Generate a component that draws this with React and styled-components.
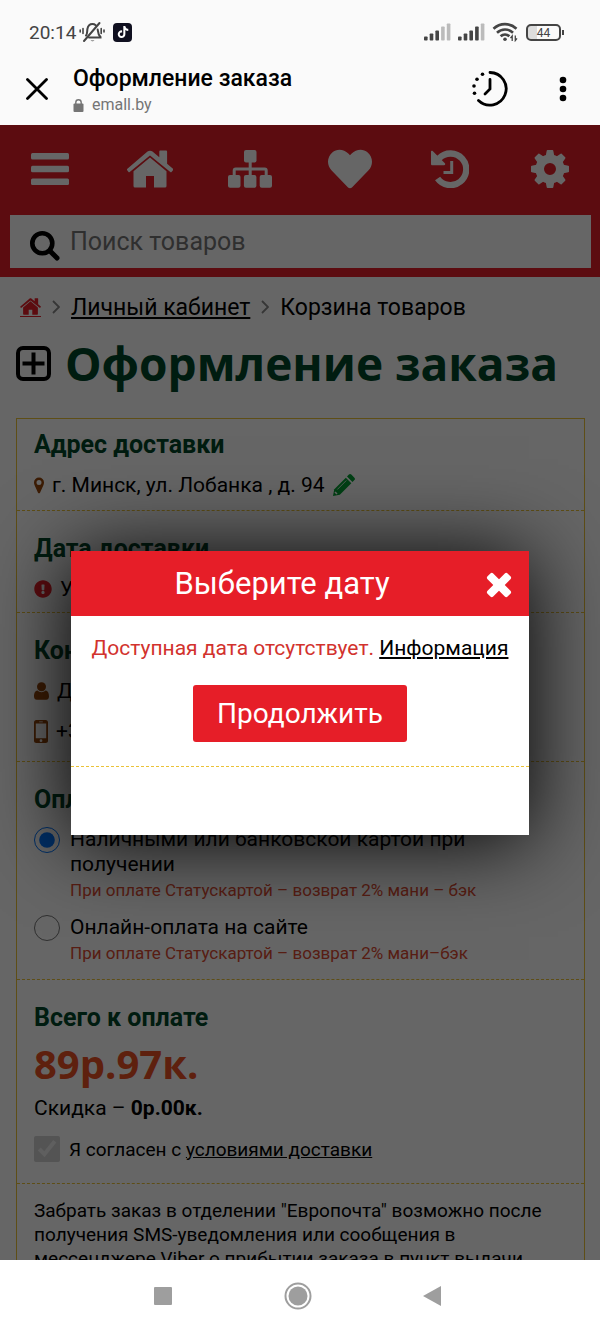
import React from 'react';
import styled, { createGlobalStyle } from 'styled-components';
import { FaExclamationCircle, FaHeart, FaTiktok } from 'react-icons/fa';

const RED = '#e61e28';
const GREEN = '#004628';
const BROWN = '#96460a';
const YELLOW = '#ebc337';

const GlobalStyle = createGlobalStyle`
  * {
    box-sizing: border-box;
  }
  body {
    margin: 0;
    background: #fff;
    color: #000;
    font-family: Roboto, "Liberation Sans", sans-serif;
  }
`;

const BellOffIcon = () => (
  <svg width="26" height="22" viewBox="0 0 26 22" fill="none" stroke="#444" strokeWidth="2" strokeLinecap="round">
    <path d="M7 14.5c1.5-1.6 1-4 1.4-6.5C9 4.700 11 3 13.500 3c1.300 0 2.300.4 3.200 1.200M18.700 8.500c.3 3 .3 5 2.800 7.500v.6H10" />
    <path d="M5 20L20.500 2" />
    <path d="M11.500 19.500a2.500 2 0 0 0 4 0z" fill="#444" stroke="none" />
    <path d="M4 7.500v5M1.200 9v2M22.200 7.500v5M25 9v2" strokeWidth="1.600" />
  </svg>
);

const SignalIcon = ({ level }) => (
  <svg width="27" height="18" viewBox="0 0 27 18">
    {[4, 7, 10, 14, 17].map((height, i) => (
      <rect
        key={height}
        x={i * 5.700}
        y={17.500 - height}
        width="3.600"
        height={height}
        rx="0.800"
        fill={i < level ? '#444' : '#bbb'}
      />
    ))}
  </svg>
);

const WifiIcon = () => (
  <svg width="27" height="20" viewBox="0 0 27 20" fill="none" stroke="#444" strokeWidth="2.600">
    <path d="M1.500 6.800c6.500-6.200 16.500-6.200 23 0" />
    <path d="M5 10.700c4.600-4.300 11.400-4.300 16 0" />
    <path d="M8.600 14.300c2.600-2.400 6.200-2.400 8.800 0" />
    <circle cx="13" cy="17.300" r="1.800" fill="#444" stroke="none" />
    <path d="M20.200 19v-5l-1.700 2.200M23.300 13.500v5l1.700-2.200" strokeWidth="1.300" />
  </svg>
);

const CloseIcon = () => (
  <svg width="22" height="22" viewBox="0 0 22 22" fill="none" stroke="#000" strokeWidth="2.800" strokeLinecap="round">
    <path d="M1.500 1.500l19 19M20.500 1.500l-19 19" />
  </svg>
);

const LockIcon = () => (
  <svg width="11" height="13" viewBox="0 0 11 13">
    <rect x="0.500" y="4.500" width="10" height="8.500" rx="1" fill="#757575" />
    <path d="M2.800 5V3.500a2.700 2.700 0 0 1 5.400 0V5" fill="none" stroke="#757575" strokeWidth="1.400" />
  </svg>
);

const RecentIcon = () => (
  <svg width="36" height="36" viewBox="0 0 36 36" fill="none" stroke="#000" strokeWidth="2.800" strokeLinecap="round">
    <path d="M18 1.500a16.300 16.300 0 1 1-11.500 28" />
    <path d="M18 8.500V18l-5 5" />
    <g fill="#000" stroke="none">
      <circle cx="10.500" cy="3.300" r="1.800" />
      <circle cx="5" cy="8.300" r="1.800" />
      <circle cx="2" cy="15" r="1.800" />
      <circle cx="2.500" cy="22.300" r="1.800" />
    </g>
  </svg>
);

const DotsIcon = () => (
  <svg width="8" height="26" viewBox="0 0 8 26">
    <circle cx="4" cy="4" r="3.300" />
    <circle cx="4" cy="13" r="3.300" />
    <circle cx="4" cy="22" r="3.300" />
  </svg>
);

const BarsIcon = () => (
  <svg width="38" height="32" viewBox="0 0 38 32" fill="currentColor">
    <rect width="38" height="6.500" rx="1.500" />
    <rect y="12.700" width="38" height="6.500" rx="1.500" />
    <rect y="25.400" width="38" height="6.500" rx="1.500" />
  </svg>
);

const HomeIcon = ({ width, height }) => (
  <svg width={width} height={height} viewBox="0 0 46 38" fill="currentColor">
    <path d="M23 7.500l16.500 13.700V36a1.500 1.500 0 0 1-1.500 1.500H27V26h-8v11.500H8A1.500 1.500 0 0 1 6.500 36V21.200z" />
    <path d="M.4 18.800L20.500 1.600c1.500-1.200 3.500-1.200 5 0l6.800 5.700V1.500c0-.5.300-.9.900-.9h6c.5 0 .9.400.9.900v12.300l6 5c.4.300.4.900.1 1.200l-1.700 1.900c-.3.400-.8.400-1.200.1L23 5.400 2.700 22c-.4.300-.9.300-1.200-.1L-.1 20c-.2-.3-.1-.9.500-1.200z" />
  </svg>
);

const SitemapIcon = () => (
  <svg width="44" height="38" viewBox="0 0 44 38" fill="currentColor">
    <rect x="16" width="12.500" height="12.500" rx="2" />
    <rect y="25" width="12.500" height="12.800" rx="2" />
    <rect x="15.900" y="25" width="12.500" height="12.800" rx="2" />
    <rect x="31.700" y="25" width="12.300" height="12.800" rx="2" />
    <path d="M22.200 12v14M6.200 26v-5.500a1.500 1.500 0 0 1 1.500-1.500h29a1.500 1.500 0 0 1 1.500 1.500V26" fill="none" stroke="currentColor" strokeWidth="3" />
  </svg>
);

const HistoryIcon = () => (
  <svg width="38" height="38" viewBox="0 0 38 38" fill="none" stroke="currentColor">
    <path d="M8.200 8.200A15.800 15.800 0 1 1 6.600 28.500" strokeWidth="6.300" />
    <path d="M0 1.800c0-1 1-1.400 1.700-.7l12.200 12.200c.7.700.3 2-.8 2H1.300C.6 15.300 0 14.700 0 14z" fill="currentColor" stroke="none" />
    <path d="M20.700 11v11.500H12.500" strokeWidth="3" />
  </svg>
);

const CogIcon = () => (
  <svg width="38" height="38" viewBox="-19 -19 38 38" fill="none" stroke="currentColor">
    <circle r="10.300" strokeWidth="8.600" />
    {[0, 45, 90, 135, 180, 225, 270, 315].map(angle => (
      <path
        key={angle}
        transform={`rotate(${angle})`}
        d="M-4.400-12.500L-3.300-18.300Q-3.200-19-2.500-19h5Q3.200-19 3.300-18.300L4.400-12.500z"
        fill="currentColor"
        stroke="none"
      />
    ))}
  </svg>
);

const SearchIcon = () => (
  <svg width="30" height="30" viewBox="0 0 30 30" fill="none" stroke="#000">
    <circle cx="12.300" cy="12.300" r="10" strokeWidth="4.600" />
    <path d="M20 20l7 7" strokeWidth="5" strokeLinecap="round" />
  </svg>
);

const ChevronIcon = () => (
  <svg width="8" height="14" viewBox="0 0 8 14" fill="none" stroke="#888" strokeWidth="1.800">
    <path d="M1 1l6 6-6 6" />
  </svg>
);

const PlusSquareIcon = () => (
  <svg width="35" height="35" viewBox="0 0 35 35" fill="none" stroke="#000" strokeWidth="4">
    <rect x="2" y="2" width="31" height="31" rx="5" />
    <path d="M17.500 6.500v22M6.500 17.500h22" />
  </svg>
);

const MarkerIcon = () => (
  <svg width="10" height="17" viewBox="0 0 10 17" fill={BROWN}>
    <path fillRule="evenodd" d="M5 .5A5 5 0 0 0 0 5.500c0 1 .2 1.700.5 2.400L4 15.700c.4.800 1.600.8 2 0l3.500-7.800c.3-.7.5-1.400.5-2.400a5 5 0 0 0-5-5zm0 2.600a2.500 2.500 0 1 1 0 5 2.500 2.500 0 0 1 0-5z" />
  </svg>
);

const PencilIcon = () => (
  <svg width="22" height="22" viewBox="0 0 22 22" fill="#00a032">
    <path d="M0 22l1.300-6.800L12.800 3.700l5.500 5.500L6.800 20.700z" />
    <path d="M14 2.500L15.900.6c.7-.7 1.700-.7 2.400 0l3.100 3.100c.7.700.7 1.700 0 2.400L19.500 8z" />
    <path d="M4.300 15.500l9-9" stroke="#fff" strokeWidth="0.800" />
    <path d="M2 18l2 2" stroke="#fff" strokeWidth="1.600" />
  </svg>
);

const UserIcon = () => (
  <svg width="15" height="18" viewBox="0 0 15 18" fill={BROWN}>
    <circle cx="7.500" cy="4.800" r="4.500" />
    <path d="M3.500 8.500c2.400 2.200 5.600 2.200 8 0C14 8.700 15 11.300 15 14.500c0 2-1.200 3.300-2.800 3.300H2.800C1.200 17.800 0 16.500 0 14.500c0-3.200 1-5.800 3.500-6z" />
  </svg>
);

const PhoneIcon = () => (
  <svg width="14" height="23" viewBox="0 0 14 23" fill={BROWN}>
    <path fillRule="evenodd" d="M2.300 0h9.400C13 0 14 1 14 2.300v18.400c0 1.300-1 2.300-2.300 2.300H2.300C1 23 0 22 0 20.700V2.300C0 1 1 0 2.300 0zM1.800 3.500v14.800h10.400V3.500zM7 19.300a1.400 1.400 0 1 0 0 2.800 1.400 1.400 0 0 0 0-2.800zM5.200 1.400v.8h3.600v-.8z" />
  </svg>
);

const TimesIcon = () => (
  <svg width="26" height="30" viewBox="-13 -17 26 30" fill="#fff">
    <rect x="-14.200" y="-4" width="28.400" height="8" rx="2" transform="rotate(45)" />
    <rect x="-14.200" y="-4" width="28.400" height="8" rx="2" transform="rotate(-45)" />
  </svg>
);

const Header = () => (
  <SiteHeader>
    <Menu>
      <MenuLink href="#menu" aria-label="Меню"><BarsIcon /></MenuLink>
      <MenuLink href="#home" aria-label="Главная"><HomeIcon width={46} height={38} /></MenuLink>
      <MenuLink href="#catalog" aria-label="Каталог"><SitemapIcon /></MenuLink>
      <MenuLink href="#favorites" aria-label="Избранное"><FaHeart size={44} /></MenuLink>
      <MenuLink href="#history" aria-label="История"><HistoryIcon /></MenuLink>
      <MenuLink href="#settings" aria-label="Настройки"><CogIcon /></MenuLink>
    </Menu>
    <SearchBox>
      <SearchIcon />
      <SearchInput type="text" name="search" aria-label="Поиск товаров" placeholder="Поиск товаров" />
    </SearchBox>
  </SiteHeader>
);

const PaymentOption = ({ id, title, note, checked }) => (
  <Option>
    <Tick type="radio" name="payment" id={id} defaultChecked={checked} />
    <div>
      <OptionLabel htmlFor={id}>{title}</OptionLabel>
      <Note>{note}</Note>
    </div>
  </Option>
);

const Order = () => (
  <Card>
    <Section $top={10} $bottom={5}>
      <SectionTitle>Адрес доставки</SectionTitle>
      <Row>
        <MarkerIcon />
        г. Минск, ул. Лобанка , д. 94
        <IconLink href="#address" aria-label="Изменить адрес"><PencilIcon /></IconLink>
      </Row>
    </Section>
    <Section $bottom={3}>
      <SectionTitle>Дата доставки</SectionTitle>
      <Row>
        <FaExclamationCircle size={18} color={RED} />
        Укажите дату
      </Row>
    </Section>
    <Section $bottom={10}>
      <SectionTitle>Контактные данные</SectionTitle>
      <Row><UserIcon />Дмитрий</Row>
      <Row><PhoneIcon />+375 29</Row>
    </Section>
    <Section $bottom={13}>
      <SectionTitle>Оплата</SectionTitle>
      <Options>
        <PaymentOption
          id="pay-cash"
          title="Наличными или банковской картой при получении"
          note="При оплате Статускартой – возврат 2% мани – бэк"
          checked
        />
        <PaymentOption
          id="pay-online"
          title="Онлайн-оплата на сайте"
          note="При оплате Статускартой – возврат 2% мани–бэк"
        />
      </Options>
    </Section>
    <Section $bottom={21}>
      <SectionTitle>Всего к оплате</SectionTitle>
      <Price>89р.97к.</Price>
      <Discount>Скидка – <b>0р.00к.</b></Discount>
      <Agreement>
        <Tick type="checkbox" id="agree" defaultChecked disabled />
        <label htmlFor="agree">
          Я согласен с <TextLink href="#terms">условиями доставки</TextLink>
        </label>
      </Agreement>
    </Section>
    <Section $top={15}>
      <Info>
        Забрать заказ в отделении "Европочта" возможно после получения
        SMS-уведомления или сообщения в мессенджере Viber о прибытии заказа в пункт выдачи
      </Info>
    </Section>
  </Card>
);

const DateModal = () => (
  <Overlay>
    <Modal role="dialog" aria-labelledby="modal-title">
      <ModalHeader>
        <ModalTitle id="modal-title">Выберите дату</ModalTitle>
        <ModalClose type="button" aria-label="Закрыть"><TimesIcon /></ModalClose>
      </ModalHeader>
      <ModalBody>
        <ModalText>
          Доступная дата отсутствует. <TextLink href="#info">Информация</TextLink>
        </ModalText>
        <SubmitButton type="button">Продолжить</SubmitButton>
      </ModalBody>
      <ModalFooter />
    </Modal>
  </Overlay>
);

const App = () => (
  <Screen>
    <GlobalStyle />
    <StatusBar>
      <Clock>20:14</Clock>
      <BellOffIcon />
      <AppBadge><FaTiktok size={12} /></AppBadge>
      <StatusRight>
        <SignalIcon level={3} />
        <SignalIcon level={4} />
        <WifiIcon />
        <Battery>44</Battery>
      </StatusRight>
    </StatusBar>
    <BrowserBar>
      <BarButton type="button" aria-label="Закрыть вкладку"><CloseIcon /></BarButton>
      <PageInfo>
        <PageTitle>Оформление заказа</PageTitle>
        <PageUrl><LockIcon />emall.by</PageUrl>
      </PageInfo>
      <BarButton type="button" aria-label="Недавние"><RecentIcon /></BarButton>
      <BarButton type="button" aria-label="Ещё"><DotsIcon /></BarButton>
    </BrowserBar>
    <Viewport>
      <Header />
      <Breadcrumbs>
        <HomeLink href="#home" aria-label="Главная"><HomeIcon width={21} height={17} /></HomeLink>
        <ChevronIcon />
        <TextLink href="#account">Личный кабинет</TextLink>
        <ChevronIcon />
        <span>Корзина товаров</span>
      </Breadcrumbs>
      <Heading><PlusSquareIcon />Оформление заказа</Heading>
      <Order />
      <DateModal />
    </Viewport>
    <SystemNav>
      <SystemButton type="button" aria-label="Приложения">
        <svg width="28" height="28"><rect x="5" y="5" width="18" height="18" rx="1" fill="#9e9e9e" /></svg>
      </SystemButton>
      <SystemButton type="button" aria-label="Домой">
        <svg width="28" height="28">
          <circle cx="14" cy="14" r="12.500" fill="none" stroke="#9e9e9e" strokeWidth="2" />
          <circle cx="14" cy="14" r="9.500" fill="#9e9e9e" />
        </svg>
      </SystemButton>
      <SystemButton type="button" aria-label="Назад">
        <svg width="28" height="28"><path d="M4 14L22 4v20z" fill="#9e9e9e" /></svg>
      </SystemButton>
    </SystemNav>
  </Screen>
);

export default App;

const Screen = styled.div`
  display: flex;
  flex-direction: column;
  height: 100vh;
`;

const StatusBar = styled.div`
  display: flex;
  flex: none;
  align-items: center;
  height: 56px;
  padding: 8px 39px 0 29px;
  background: #fafafa;
`;

const Clock = styled.span`
  margin-right: 3px;
  color: #444;
  font-size: 19px;
`;

const AppBadge = styled.span`
  display: flex;
  align-items: center;
  justify-content: center;
  width: 19px;
  height: 19px;
  margin-left: 8px;
  border-radius: 4px;
  background: #101020;
  color: #fff;
`;

const StatusRight = styled.div`
  display: flex;
  align-items: center;
  gap: 7px;
  margin-left: auto;
`;

const Battery = styled.span`
  position: relative;
  width: 35px;
  height: 17px;
  border: 2px solid #444;
  border-radius: 5px;
  background: linear-gradient(90deg, #ddd 30%, transparent 30%);
  color: #444;
  font-size: 12px;
  line-height: 14px;
  text-align: center;
  &::after {
    position: absolute;
    top: 4px;
    right: -5px;
    width: 2px;
    height: 5px;
    background: #444;
    content: '';
  }
`;

const BrowserBar = styled.div`
  display: flex;
  flex: none;
  align-items: center;
  height: 69px;
  padding: 0 15px 3px;
  background: #fafafa;
`;

const BarButton = styled.button`
  display: flex;
  align-items: center;
  justify-content: center;
  min-width: 44px;
  height: 44px;
  padding: 0;
  border: 0;
  background: none;
  & + & {
    margin-left: 29px;
  }
`;

const PageInfo = styled.div`
  flex: 1;
  padding: 4px 0 0 14px;
`;

const PageTitle = styled.div`
  font-size: 23px;
  font-weight: 500;
  line-height: 28px;
`;

const PageUrl = styled.div`
  display: flex;
  align-items: center;
  gap: 8px;
  color: #757575;
  font-size: 16px;
  line-height: 24px;
`;

const Viewport = styled.main`
  position: relative;
  flex: 1;
  min-height: 0;
  overflow: hidden;
`;

const SiteHeader = styled.header`
  padding-bottom: 9px;
  background: ${RED};
`;

const Menu = styled.nav`
  display: grid;
  grid-template-columns: repeat(6, 1fr);
  height: 90px;
  padding-bottom: 2px;
`;

const MenuLink = styled.a`
  display: flex;
  align-items: center;
  justify-content: center;
  color: #fff;
`;

const SearchBox = styled.div`
  display: flex;
  align-items: center;
  height: 53px;
  margin: 0 9px 0 10px;
  padding: 0 10px 0 20px;
  background: #fff;
  svg {
    flex: none;
    margin-top: 8px;
  }
`;

const SearchInput = styled.input`
  flex: 1;
  min-width: 0;
  height: 52px;
  padding: 0 10px;
  border: 0;
  background: none;
  font-family: inherit;
  font-size: 25px;
  &::placeholder {
    color: #757575;
  }
`;

const Breadcrumbs = styled.nav`
  display: flex;
  align-items: center;
  gap: 11px;
  height: 60px;
  padding: 0 20px;
  font-size: 23px;
`;

const HomeLink = styled.a`
  display: flex;
  padding-bottom: 1px;
  border-bottom: 1px solid ${RED};
  color: ${RED};
`;

const TextLink = styled.a`
  color: #000;
  text-decoration: underline;
`;

const Heading = styled.h1`
  display: flex;
  align-items: center;
  gap: 14px;
  margin: 0 16px 29px;
  color: ${GREEN};
  font-family: "Open Sans", "Noto Sans", sans-serif;
  font-size: 46px;
  font-weight: 700;
  line-height: 52px;
  white-space: nowrap;
`;

const Card = styled.div`
  margin: 0 15px 0 16px;
  border: 1px solid ${YELLOW};
`;

const Section = styled.section`
  padding: ${({ $top = 22 }) => $top}px 17px ${({ $bottom = 15 }) => $bottom}px;
  border-bottom: 1px dashed ${YELLOW};
`;

const SectionTitle = styled.h2`
  margin: 0 0 4px;
  color: ${GREEN};
  font-size: 25px;
  font-weight: 700;
  line-height: 32px;
`;

const Row = styled.div`
  display: flex;
  align-items: center;
  gap: 8px;
  height: 40px;
  font-size: 21px;
`;

const IconLink = styled.a`
  display: flex;
`;

const Options = styled.div`
  display: flex;
  flex-direction: column;
  gap: 12px;
  padding-top: 7px;
`;

const Option = styled.div`
  display: flex;
  align-items: flex-start;
  gap: 10px;
`;

const Tick = styled.input`
  flex: none;
  width: 26px;
  height: 26px;
  margin: 0;
`;

const OptionLabel = styled.label`
  display: block;
  max-width: 440px;
  font-size: 21px;
  line-height: 25px;
`;

const Note = styled.div`
  color: #dc4b32;
  font-size: 17px;
  line-height: 26px;
`;

const Price = styled.div`
  color: #eb5023;
  font-family: "Open Sans", "Noto Sans", sans-serif;
  font-size: 40px;
  font-weight: 700;
  line-height: 52px;
`;

const Discount = styled.div`
  font-size: 21px;
  line-height: 36px;
`;

const Agreement = styled.div`
  display: flex;
  align-items: center;
  gap: 9px;
  margin-top: 10px;
  font-size: 19px;
`;

const Info = styled.p`
  margin: 0;
  font-size: 19px;
  line-height: 24px;
`;

const Overlay = styled.div`
  position: absolute;
  inset: 0;
  display: flex;
  align-items: center;
  justify-content: center;
  padding: 0 71px;
  background: rgba(0, 0, 0, 0.6);
`;

const Modal = styled.div`
  flex: 1;
  max-width: 600px;
  background: #fff;
  box-shadow: 0 5px 80px #000;
`;

const ModalHeader = styled.div`
  display: flex;
  align-items: center;
  height: 65px;
  padding-left: 24px;
  background: ${RED};
`;

const ModalTitle = styled.h2`
  flex: 1;
  margin: 0;
  color: #fff;
  font-size: 31px;
  font-weight: 400;
  text-align: center;
`;

const ModalClose = styled.button`
  display: flex;
  align-items: center;
  justify-content: center;
  width: 60px;
  height: 60px;
  padding: 0;
  border: 0;
  background: none;
`;

const ModalBody = styled.div`
  padding: 16px 10px 24px;
  border-bottom: 1px dashed ${YELLOW};
  text-align: center;
`;

const ModalText = styled.p`
  margin: 0 0 21px;
  color: #d2322d;
  font-size: 21px;
  line-height: 32px;
`;

const SubmitButton = styled.button`
  height: 57px;
  padding: 0 24px;
  border: 0;
  border-radius: 3px;
  background: ${RED};
  color: #fff;
  font-family: inherit;
  font-size: 28px;
`;

const ModalFooter = styled.div`
  height: 68px;
`;

const SystemNav = styled.div`
  display: flex;
  flex: none;
  align-items: center;
  justify-content: center;
  height: 72px;
  padding-right: 4px;
  background: #fff;
`;

const SystemButton = styled.button`
  display: flex;
  justify-content: center;
  width: 135px;
  padding: 0;
  border: 0;
  background: none;
`;
